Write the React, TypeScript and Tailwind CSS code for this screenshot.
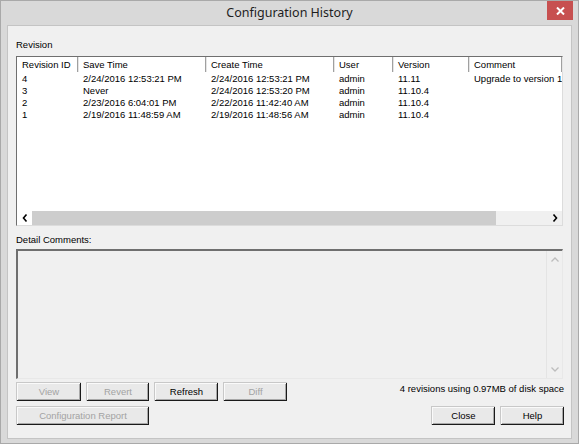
import React from 'react';

const font = { fontFamily: '"Liberation Sans", Arial, sans-serif' };

const columns = [
  { label: 'Revision ID', w: 'w-[61px]' },
  { label: 'Save Time', w: 'w-[128px]' },
  { label: 'Create Time', w: 'w-[128px]' },
  { label: 'User', w: 'w-[59px]' },
  { label: 'Version', w: 'w-[76px]' },
  { label: 'Comment', w: 'flex-1' },
];

const rows = [
  ['4', '2/24/2016 12:53:21 PM', '2/24/2016 12:53:21 PM', 'admin', '11.11', 'Upgrade to version 11.11'],
  ['3', 'Never', '2/24/2016 12:53:20 PM', 'admin', '11.10.4', ''],
  ['2', '2/23/2016 6:04:01 PM', '2/22/2016 11:42:40 AM', 'admin', '11.10.4', ''],
  ['1', '2/19/2016 11:48:59 AM', '2/19/2016 11:48:56 AM', 'admin', '11.10.4', ''],
];

function Button({ label, disabled, w }: { label: string; disabled?: boolean; w: string }) {
  return (
    <div
      className={`${w} h-[19px] flex items-center justify-center bg-[#e9e9e9] border-t border-l border-[#c8c8c8] shadow-[inset_-1px_-1px_0_#1a1a1a,inset_1px_1px_0_#fafafa,inset_-2px_-2px_0_#a8a8a8] text-[9.5px] ${
        disabled ? 'text-[#a3a3a3]' : 'text-black'
      }`}
    >
      {label}
    </div>
  );
}

export default function App() {
  return (
    <div className="w-[579px] h-[444px] bg-[#d9d9d9] border border-[#a9a9a9] flex flex-col" style={font}>
      {/* Title bar */}
      <div className="h-[24px] shrink-0 flex items-start relative">
        <div className="flex-1 text-center text-[12.5px] text-[#1e1e1e] pt-[3px]" style={{ fontFamily: '"Noto Sans", "Open Sans", sans-serif' }}>
          Configuration History
        </div>
        <div className="absolute right-[5px] top-0 w-[26px] h-[19px] bg-[#c75050] flex items-center justify-center">
          <svg width="9" height="8" viewBox="0 0 9 8">
            <path d="M1 0.5 L8 7.5 M8 0.5 L1 7.5" stroke="#fff" strokeWidth="2" />
          </svg>
        </div>
      </div>

      {/* Client area */}
      <div className="mx-[6px] mb-[4px] flex-1 bg-[#f0f0f0] border border-[#c4c4c4] flex flex-col px-[8px] pt-[13px] text-[9.5px] text-black">
        <div className="h-[12px] leading-[12px] mb-[5px]">Revision</div>

        {/* List view */}
        <div className="h-[170px] bg-white border-t border-l border-[#6f6f6f] border-r border-b border-r-[#dcdcdc] border-b-[#dcdcdc] flex flex-col">
          <div className="h-[15px] flex shrink-0">
            {columns.map((c) => (
              <div key={c.label} className={`${c.w} shrink-0 h-full pl-[5px] leading-[15px] border-r border-[#a0a0a0] shadow-[1px_0_0_#e5e5e5] whitespace-nowrap overflow-hidden`}>
                {c.label}
              </div>
            ))}
          </div>
          <div className="flex-1 pt-[1px] overflow-hidden">
            {rows.map((r) => (
              <div key={r[0]} className="h-[12px] leading-[12px] flex">
                {r.map((cell, i) => (
                  <div key={i} className={`${columns[i].w} shrink-0 pl-[5px] whitespace-nowrap overflow-hidden`}>
                    {cell}
                  </div>
                ))}
              </div>
            ))}
          </div>
          {/* Horizontal scrollbar */}
          <div className="h-[14px] flex shrink-0 bg-[#f0f0f0]">
            <div className="w-[15px] bg-white flex items-center justify-center">
              <svg width="6" height="8" viewBox="0 0 6 8">
                <path d="M4.5 0.5 L1.5 4 L4.5 7.5" stroke="#000" strokeWidth="1.6" fill="none" />
              </svg>
            </div>
            <div className="w-[464px] bg-[#cdcdcd]" />
            <div className="flex-1" />
            <div className="w-[15px] flex items-center justify-center">
              <svg width="6" height="8" viewBox="0 0 6 8">
                <path d="M1.5 0.5 L4.5 4 L1.5 7.5" stroke="#000" strokeWidth="1.6" fill="none" />
              </svg>
            </div>
          </div>
        </div>

        <div className="h-[12px] leading-[12px] mt-[8px] mb-[3px]">Detail Comments:</div>

        {/* Comments box */}
        <div className="h-[130px] bg-[#f0f0f0] border-t-2 border-l-2 border-[#6f6f6f] border-r border-b border-r-[#e8e8e8] border-b-[#e8e8e8] flex">
          <div className="flex-1" />
          <div className="w-[16px] border-l border-[#e4e4e4] flex flex-col items-center justify-between py-[6px]">
            <svg width="8" height="5" viewBox="0 0 8 5">
              <path d="M0.5 4.5 L4 1 L7.5 4.5" stroke="#bdbdbd" strokeWidth="1.3" fill="none" />
            </svg>
            <svg width="8" height="5" viewBox="0 0 8 5">
              <path d="M0.5 0.5 L4 4 L7.5 0.5" stroke="#bdbdbd" strokeWidth="1.3" fill="none" />
            </svg>
          </div>
        </div>

        {/* Buttons */}
        <div className="flex mt-[3px] items-start">
          <div className="flex gap-[5px]">
            <Button label="View" disabled w="w-[65px]" />
            <Button label="Revert" disabled w="w-[63px]" />
            <Button label="Refresh" w="w-[64px]" />
            <Button label="Diff" disabled w="w-[64px]" />
          </div>
          <div className="flex-1 text-right pt-[1px] leading-[12px] -mr-[1px]">4 revisions using 0.97MB of disk space</div>
        </div>
        <div className="flex mt-[5px] justify-between">
          <Button label="Configuration Report" disabled w="w-[133px]" />
          <div className="flex gap-[5px] -mr-[1px]">
            <Button label="Close" w="w-[64px]" />
            <Button label="Help" w="w-[64px]" />
          </div>
        </div>
      </div>
    </div>
  );
}
